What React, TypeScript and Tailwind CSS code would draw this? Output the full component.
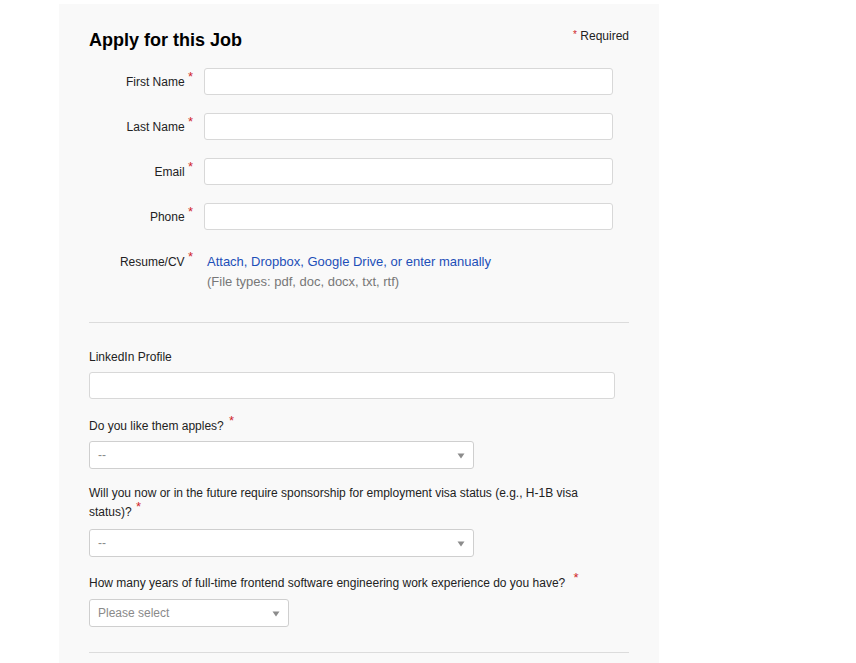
import React from "react";

function Star({ className = "" }: { className?: string }) {
  return <span className={`relative -top-[5px] text-[13px] leading-none text-[#d0262a] ${className}`}>*</span>;
}

function TextInput() {
  return <div className="h-[27px] w-[409px] rounded-[3px] border border-[#d8d8d8] bg-white" />;
}

function Select({ value, width }: { value: string; width: string }) {
  return (
    <div className={`flex h-[28px] items-center justify-between rounded-[3px] border border-[#cfcfcf] bg-white pl-[8px] pr-[8px] ${width}`}>
      <span className="text-[12px] text-[#8a8a8a]">{value}</span>
      <svg width="8" height="6" viewBox="0 0 8 6" className="mt-[1px]">
        <path d="M0.5 0.5 L7.5 0.5 L4 5.5 Z" fill="#8c8c8c" />
      </svg>
    </div>
  );
}

const fields = ["First Name", "Last Name", "Email", "Phone"];

export default function App() {
  return (
    <div className="min-h-screen bg-white font-['Liberation_Sans',Arial,sans-serif] text-[#222]">
      <div className="ml-[59px] mt-[4px] w-[600px] bg-[#f9f9f9] px-[30px] pt-[24px] pb-[40px]">
        {/* header */}
        <div className="flex items-start justify-between">
          <h2 className="text-[18px] font-bold leading-[24px] text-black">Apply for this Job</h2>
          <div className="mt-[1px] text-[12px] leading-[14px] text-[#222]">
            <span className="relative -top-[2px] text-[10px] text-[#d0262a]">*</span> Required
          </div>
        </div>

        {/* basic fields */}
        <div className="mt-[16px] flex flex-col gap-[18px]">
          {fields.map((f) => (
            <div key={f} className="flex items-center">
              <label className="w-[105px] pr-[1px] text-right text-[12px] leading-[18px]">
                {f} <Star />
              </label>
              <div className="ml-[10px]">
                <TextInput />
              </div>
            </div>
          ))}
          <div className="mt-[4px] flex items-start">
            <label className="w-[105px] pr-[1px] text-right text-[12px] leading-[20px]">
              Resume/CV <Star />
            </label>
            <div className="ml-[13px]">
              <div className="text-[13px] leading-[20px] text-[#1d4fb8]">Attach, Dropbox, Google Drive, or enter manually</div>
              <div className="text-[13px] leading-[20px] text-[#777]">(File types: pdf, doc, docx, txt, rtf)</div>
            </div>
          </div>
        </div>

        <div className="mt-[30px] border-t border-[#dcdcdc]" />

        {/* custom questions */}
        <div className="mt-[25px] text-[12px] leading-[18px]">LinkedIn Profile</div>
        <div className="mt-[6px] h-[27px] w-[526px] rounded-[3px] border border-[#d8d8d8] bg-white" />

        <div className="mt-[18px] text-[12px] leading-[18px]">
          Do you like them apples? <Star className="ml-[2px]" />
        </div>
        <div className="mt-[6px]">
          <Select value="--" width="w-[385px]" />
        </div>

        <div className="mt-[15px] max-w-[520px] text-[12px] leading-[19px]">
          Will you now or in the future require sponsorship for employment visa status (e.g., H-1B visa status)? <Star className="ml-[1px]" />
        </div>
        <div className="mt-[7px]">
          <Select value="--" width="w-[385px]" />
        </div>

        <div className="mt-[17px] text-[12px] leading-[18px]">
          How many years of full-time frontend software engineering work experience do you have? <Star className="ml-[5px]" />
        </div>
        <div className="mt-[7px]">
          <Select value="Please select" width="w-[200px]" />
        </div>

        <div className="mt-[25px] border-t border-[#dcdcdc]" />
      </div>
    </div>
  );
}
